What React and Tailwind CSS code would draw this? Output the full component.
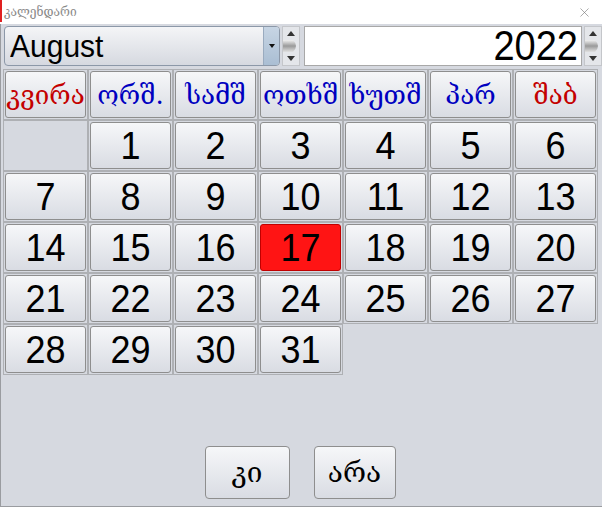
import { X } from "lucide-react";

const heads = [
  { t: "კვირა", red: true },
  { t: "ორშ." },
  { t: "სამშ" },
  { t: "ოთხშ" },
  { t: "ხუთშ" },
  { t: "პარ" },
  { t: "შაბ", red: true },
];

const geo = { fontFamily: '"DejaVu Serif", "DejaVu Sans", serif' };
const sans = { fontFamily: '"Liberation Sans", Arial, sans-serif' };

function Spinner() {
  return (
    <div className="w-[18px] h-[40px] flex flex-col items-center justify-between bg-[#e4e6ea] border border-[#c4c6ca]">
      <svg width="16" height="12" viewBox="0 0 16 12">
        <path d="M4 9 L8 4 L12 9 Z" fill="#333" />
      </svg>
      <svg width="16" height="12" viewBox="0 0 16 12">
        <defs>
          <linearGradient id="bulge" x1="0" x2="0" y1="0" y2="1">
            <stop offset="0" stopColor="#f0f0f0" />
            <stop offset="0.5" stopColor="#9a9a9a" />
            <stop offset="1" stopColor="#e0e0e0" />
          </linearGradient>
        </defs>
        <path d="M0 0 L10 0 Q16 6 10 12 L0 12 Z" fill="url(#bulge)" />
      </svg>
      <svg width="16" height="12" viewBox="0 0 16 12">
        <path d="M4 3 L12 3 L8 8 Z" fill="#333" />
      </svg>
    </div>
  );
}

function DayBtn({ n, sel }) {
  return (
    <div className="border border-[#aeb0b4] p-px">
      <div
        className={
          "h-full rounded-[3px] border flex items-center justify-center " +
          (sel
            ? "bg-[#ff1414] border-[#c00000]"
            : "bg-gradient-to-b from-[#f6f7f9] to-[#d9dce3] border-[#8e8e8e]")
        }
      >
        <span className="inline-block text-[36px] leading-none scale-y-110 text-black" style={sans}>
          {n}
        </span>
      </div>
    </div>
  );
}

export default function App() {
  const cells = [null];
  for (let i = 1; i <= 31; i++) cells.push(i);

  return (
    <div className="w-[602px] h-[509px] bg-white flex flex-col overflow-hidden">
      <div className="h-[24px] flex items-center justify-between pl-1 pr-[10px] relative">
        <div className="absolute left-0 top-0 w-[2px] h-[22px] bg-[#e02020]" />
        <span className="text-[12px] text-[#8a8a8a]" style={geo}>კალენდარი</span>
        <X size={15} strokeWidth={1} color="#777" />
      </div>
      <div className="h-[483px] bg-[#d6d9e0] border-l border-b border-[#9a9ca0] flex flex-col">
        <div className="flex items-center gap-[2px] pl-[3px] pt-[2px]">
          <div className="w-[276px] h-[40px] rounded-[4px] border border-[#8c98a8] bg-gradient-to-b from-[#f4f5f7] to-[#d6d9e0] flex overflow-hidden">
            <div className="flex-1 flex items-center pl-[5px]">
              <span className="inline-block text-[30px] leading-none scale-y-[1.07]" style={sans}>August</span>
            </div>
            <div className="w-[16px] bg-gradient-to-b from-[#c7d5e4] to-[#aabed3] border-l border-[#9aabbf] flex items-center justify-center">
              <svg width="8" height="6" viewBox="0 0 8 6">
                <path d="M1 1 L7 1 L4 5 Z" fill="#111" />
              </svg>
            </div>
          </div>
          <Spinner />
          <div className="w-[278px] h-[40px] ml-[2px] bg-white border border-[#a8a8a8] flex items-center justify-end pr-[3px]">
            <span className="inline-block text-[38px] leading-none scale-y-110" style={sans}>2022</span>
          </div>
          <Spinner />
        </div>

        <div className="grid grid-cols-[repeat(7,85px)] auto-rows-[51px] ml-[2px] mt-[3px]">
          {heads.map((h) => (
            <div key={h.t} className="border border-[#aeb0b4] p-px">
              <div
                className={
                  "h-full rounded-[3px] border border-[#8e8e8e] bg-gradient-to-b from-[#f6f7f9] to-[#d9dce3] flex items-center justify-center text-[26px] leading-none whitespace-nowrap " +
                  (h.red ? "text-[#c40000]" : "text-[#0000c0]")
                }
                style={geo}
              >
                {h.t}
              </div>
            </div>
          ))}
          {cells.map((n, i) =>
            n === null ? (
              <div key={"e" + i} className="border border-[#aeb0b4]" />
            ) : (
              <DayBtn key={n} n={n} sel={n === 17} />
            )
          )}
        </div>

        <div className="flex-1 flex items-end justify-center gap-[24px] pb-[7px] pr-[3px]">
          <button className="w-[85px] h-[53px] rounded-[4px] border border-[#8e8e8e] bg-gradient-to-b from-[#f6f7f9] to-[#d9dce3] text-[28px] text-black" style={geo}>
            კი
          </button>
          <button className="w-[82px] h-[53px] rounded-[4px] border border-[#8e8e8e] bg-gradient-to-b from-[#f6f7f9] to-[#d9dce3] text-[28px] text-black" style={geo}>
            არა
          </button>
        </div>
      </div>
    </div>
  );
}
